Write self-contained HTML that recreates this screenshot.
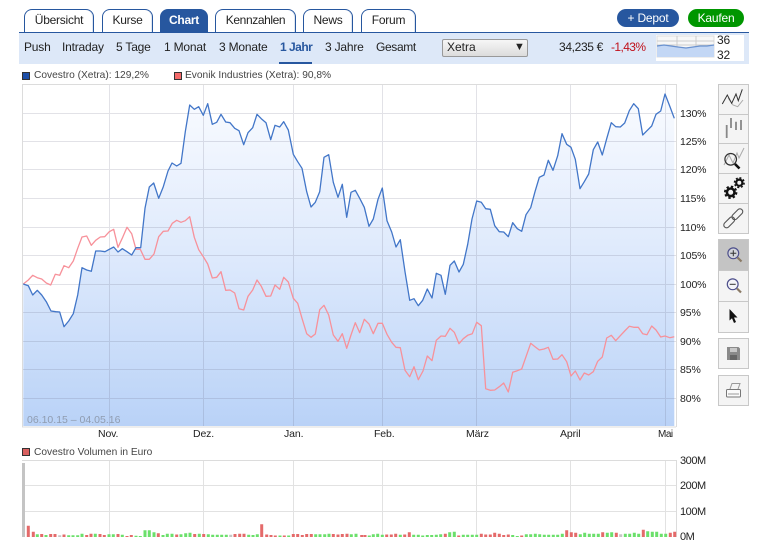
<!DOCTYPE html>
<html><head><meta charset="utf-8"><style>
html,body{margin:0;padding:0;background:#fff}
body{width:768px;height:546px;position:relative;overflow:hidden;font-family:"Liberation Sans",sans-serif;color:#222}
.a{position:absolute;white-space:nowrap}
.tab{position:absolute;top:9px;height:22px;line-height:21px;border:1px solid #27579f;border-bottom:0;border-radius:8px 8px 0 0;background:#fff;font-size:12px;letter-spacing:-.25px;text-align:center;box-sizing:content-box;color:#222;box-shadow:inset -1px 0 0 #dfe6f0}
.n{position:absolute;top:40px;font-size:12px;letter-spacing:-.2px;line-height:14px;white-space:nowrap;color:#222}
.l{position:absolute;font-size:10.5px;letter-spacing:-.12px;line-height:13px;white-space:nowrap;color:#222}
.v{font-size:11px;letter-spacing:-.45px}
.lg{font-size:10.2px;letter-spacing:0;color:#444}
.btn{position:absolute;top:9px;height:18px;line-height:18px;border-radius:9px;color:#fff;font-size:12px;letter-spacing:-.2px;text-align:center}
</style></head><body>
<div class="tab" style="left:24px;width:68px">Übersicht</div>
<div class="tab" style="left:102px;width:49px">Kurse</div>
<div class="tab" style="left:160px;width:46px;background:#27579f;color:#fff;font-weight:bold;box-shadow:none">Chart</div>
<div class="tab" style="left:215px;width:79px;letter-spacing:-.4px">Kennzahlen</div>
<div class="tab" style="left:303px;width:48px">News</div>
<div class="tab" style="left:361px;width:53px">Forum</div>
<div class="btn" style="left:617px;width:62px;background:#27579f">+ Depot</div>
<div class="btn" style="left:688px;width:56px;background:#009600">Kaufen</div>

<div class="a" style="left:19px;top:32px;width:730px;height:32px;background:#dde8f8;border-top:1px solid #27579f;box-sizing:border-box"></div>
<div class="n" style="left:24px">Push</div>
<div class="n" style="left:62px">Intraday</div>
<div class="n" style="left:116px">5 Tage</div>
<div class="n" style="left:164px">1 Monat</div>
<div class="n" style="left:219px">3 Monate</div>
<div class="n" style="left:280px;font-weight:bold;color:#27579f;letter-spacing:-.5px">1 Jahr</div>
<div class="a" style="left:279px;top:62px;width:33px;height:2px;background:#27579f"></div>
<div class="n" style="left:325px">3 Jahre</div>
<div class="n" style="left:376px;letter-spacing:-.35px">Gesamt</div>
<div class="a" style="left:442px;top:39px;width:86px;height:18px;box-sizing:border-box;border:1px solid #999;border-radius:2px;background:linear-gradient(#f6f6f6,#dcdcdc);font-size:12px;line-height:15px;padding-left:4px">Xetra<span style="position:absolute;left:71px;top:0;font-size:11px">▼</span></div>
<div class="n" style="left:559px;letter-spacing:-.35px">34,235 €</div>
<div class="n" style="left:611px;color:#c0101a;letter-spacing:-.6px">-1,43%</div>
<div class="a" style="left:656px;top:35px;width:88px;height:26px;background:#fff"></div>
<svg class="a" style="left:656px;top:35px" width="60" height="26" viewBox="0 0 60 26">
<rect x="1" y="1" width="57" height="21" fill="#f7f7f7" stroke="#ddd"/>
<path d="M1 6H58M1 10H58M21 1V22M40 1V22" stroke="#ccc" fill="none"/>
<path d="M1 11L8 10L15 11L22 12L30 13L37 12L44 11L51 11L58 10V22H1Z" fill="#c3d7f5"/>
<path d="M1 11L8 10L15 11L22 12L30 13L37 12L44 11L51 11L58 10" fill="none" stroke="#6a92cf" stroke-width="1.2"/>
</svg>
<div class="n" style="left:717px;top:33px">36</div>
<div class="n" style="left:717px;top:48px">32</div>

<svg class="a" style="left:22px;top:72px" width="9" height="8"><rect x=".5" y=".5" width="7" height="7" fill="#1d4fa8" stroke="#333"/></svg>
<div class="l lg" style="left:34px;top:69px">Covestro (Xetra): 129,2%</div>
<svg class="a" style="left:174px;top:72px" width="9" height="8"><rect x=".5" y=".5" width="7" height="7" fill="#f46a6a" stroke="#333"/></svg>
<div class="l lg" style="left:185px;top:69px">Evonik Industries (Xetra): 90,8%</div>

<svg class="a" style="left:0;top:0" width="768" height="546" viewBox="0 0 768 546">
<defs><linearGradient id="g" gradientUnits="userSpaceOnUse" x1="0" y1="95" x2="0" y2="426"><stop offset="0" stop-color="#f9fbff"/><stop offset=".5" stop-color="#dde9fc"/><stop offset="1" stop-color="#b9d2f7"/></linearGradient></defs>
<path fill="url(#g)" d="M23.3 284L28.3 285.7 32.7 295 37.3 290.3 41.7 295 46.3 301.7 51 311 55.7 311.7 59.7 312 64 326.7 68.7 321 73.3 313.7 77.7 295 82 267.7 86.7 270 91.3 271.3 95.7 251 100.3 251 105 251.7 109.3 249.3 113.7 247 118 252 122.3 248.7 127 251.7 131.7 255 136 247.7 140.7 247.7 145 208.3 149.3 187 153.7 183 158.7 198.3 163.3 186.7 168 171 172 163 176.7 166 181 163.3 185.3 131.7 189.7 105 194.3 109.3 198.7 106.7 203.3 115.3 207.7 103.7 212.3 124.3 216.7 122.3 221 114.3 225.7 122 230 122.7 234.7 128.3 239 130.7 243.7 144.7 248 132.7 252.7 127.7 257 114.3 261.3 118.7 266 122.7 270.7 139.7 275 125.3 279.7 127 283.7 121.7 288.3 130 293.3 154.3 297.7 161.7 302 168.3 306.7 191.7 311 207 315.3 202.3 319.7 191.7 324 157.3 328.7 154.7 333.3 182.3 338 197.3 342.3 184.3 346.7 217.3 351 192.3 355.3 190.3 359.7 198.3 364.3 207.3 369 226.3 373.3 219 378 199.3 382.3 188 387 220.7 391.7 232 396 247 400.3 239.7 405 271.7 409.7 300.3 414 298.7 418.3 305.7 422.7 300.3 427.3 289 432 298 436.3 273.3 441 275.3 445.3 294.3 450 265.3 454.3 261 459 272 463.3 264.3 467.7 244.3 472 219 476.7 201 481.3 202.3 485.7 208.7 490.3 209.3 494.7 225.7 499.3 231.7 503.7 232 508.3 236.7 512.7 222.7 517.3 228.7 521.7 231.3 526 214.7 530.7 207.7 535 191.7 539.3 177.3 544 175 548.3 160.3 553 170.3 557.7 155.7 562 133.7 566.7 144.3 571 147.3 575.3 159.3 580 188.7 584.3 181.7 588.7 174 593.3 149.7 597.7 142 602.3 155 606.7 138.7 611.3 122.7 615.7 126.7 620.3 127 624.7 123 629.3 110.7 633.7 103.7 638.3 108.7 642.7 135 647 130.7 651.7 126 656 114.3 660.7 111 665 94 669.7 106 674.3 118.3V426H23.3Z"/>
<path fill="none" stroke="rgb(100,100,125)" stroke-opacity=".19" stroke-width="1" d="M23 113.5H676M23 141.5H676M23 169.5H676M23 198.5H676M23 227.5H676M23 255.5H676M23 284.5H676M23 312.5H676M23 341.5H676M23 369.5H676M23 398.5H676M109.5 85V426M203.5 85V426M293.5 85V426M382.5 85V426M476.5 85V426M570.5 85V426M665.5 85V426"/>
<path fill="none" stroke="#dcdcdc" d="M22.5 84V427H676M22.5 84.5H676.5V427"/>
<path fill="none" stroke="#f7919a" stroke-width="1.3" stroke-linejoin="round" d="M23.3 284L28.3 280 32.7 275.3 37.3 277.7 41.7 279 46.3 283 50.7 285 55.3 274.3 59.7 275.3 64 265.7 68.7 267.7 73.3 261 77.7 248.3 82 237 86.7 236 91.3 245.3 95.7 240.3 100.3 237 104.7 236.7 109.3 231.7 113.7 229.3 118 247.3 122.7 237.3 127 227.3 131.7 233.7 136 249.3 140.3 249.3 145 259.3 149.3 259.3 154 254 158.7 236.7 163.3 231.3 168 231 172.3 223.3 176.7 220.3 181 222.3 185.3 220.7 189.7 216.7 194.3 237.3 198.7 249.7 203.3 256.7 207.7 264 212.3 278 216.7 277.3 221 271.7 225.7 290.3 230 290 234.7 293 239 308.7 243.7 310 248 296.3 252.7 290 257 280 261.3 286.3 266 296.3 270.7 296 275 285 279.7 289.3 283.7 277.3 288.3 282 293.3 298.3 297.7 303.3 302 318.3 306.7 333.7 311 337.3 315.3 334 319.7 309.7 324 305.3 328.7 315 333.3 335 338 341.3 342.3 333.7 346.7 348.3 351 335 355.3 322.7 359.7 332.7 364.3 319.3 369 324 373.3 333.7 378 323.3 382.3 323.3 387 334.3 391.7 342.3 396 347.3 400.3 347.7 405 370.3 409.7 376.7 414 366.7 418.3 379.7 423 371 427.3 356 432 360.7 436.3 340.3 441 336 445.3 336.3 450 328.3 454.3 332.3 459 343.7 463.3 338.7 467.7 335.3 472.3 333.7 476.7 322.3 481.3 325.7 485.7 388.7 490.3 390.3 494.7 390 499.3 386.7 503.7 383 508.3 392 512.7 372.3 517.3 370.7 521.7 369 526 356.7 530.7 343.3 535 346.7 539.3 350 544 349 548.3 347.3 553 359.3 557.7 359 562 354.7 566.7 361.7 571 376 575.3 371 580 380 584.3 373 588.7 375 593.3 371.7 597.7 361.3 602.3 357 606.7 338 611.3 335.3 615.7 340.7 620.3 335.7 624.7 331 629.3 326.3 633.7 327.3 638.3 327.3 642.7 333.7 647 334.7 651.7 326 656 330 660.7 337 665 336 669.7 337.7 674.3 336.7"/>
<path fill="none" stroke="#4276c8" stroke-width="1.3" stroke-linejoin="round" d="M23.3 284L28.3 285.7 32.7 295 37.3 290.3 41.7 295 46.3 301.7 51 311 55.7 311.7 59.7 312 64 326.7 68.7 321 73.3 313.7 77.7 295 82 267.7 86.7 270 91.3 271.3 95.7 251 100.3 251 105 251.7 109.3 249.3 113.7 247 118 252 122.3 248.7 127 251.7 131.7 255 136 247.7 140.7 247.7 145 208.3 149.3 187 153.7 183 158.7 198.3 163.3 186.7 168 171 172 163 176.7 166 181 163.3 185.3 131.7 189.7 105 194.3 109.3 198.7 106.7 203.3 115.3 207.7 103.7 212.3 124.3 216.7 122.3 221 114.3 225.7 122 230 122.7 234.7 128.3 239 130.7 243.7 144.7 248 132.7 252.7 127.7 257 114.3 261.3 118.7 266 122.7 270.7 139.7 275 125.3 279.7 127 283.7 121.7 288.3 130 293.3 154.3 297.7 161.7 302 168.3 306.7 191.7 311 207 315.3 202.3 319.7 191.7 324 157.3 328.7 154.7 333.3 182.3 338 197.3 342.3 184.3 346.7 217.3 351 192.3 355.3 190.3 359.7 198.3 364.3 207.3 369 226.3 373.3 219 378 199.3 382.3 188 387 220.7 391.7 232 396 247 400.3 239.7 405 271.7 409.7 300.3 414 298.7 418.3 305.7 422.7 300.3 427.3 289 432 298 436.3 273.3 441 275.3 445.3 294.3 450 265.3 454.3 261 459 272 463.3 264.3 467.7 244.3 472 219 476.7 201 481.3 202.3 485.7 208.7 490.3 209.3 494.7 225.7 499.3 231.7 503.7 232 508.3 236.7 512.7 222.7 517.3 228.7 521.7 231.3 526 214.7 530.7 207.7 535 191.7 539.3 177.3 544 175 548.3 160.3 553 170.3 557.7 155.7 562 133.7 566.7 144.3 571 147.3 575.3 159.3 580 188.7 584.3 181.7 588.7 174 593.3 149.7 597.7 142 602.3 155 606.7 138.7 611.3 122.7 615.7 126.7 620.3 127 624.7 123 629.3 110.7 633.7 103.7 638.3 108.7 642.7 135 647 130.7 651.7 126 656 114.3 660.7 111 665 94 669.7 106 674.3 118.3"/>

<path fill="none" stroke="#e2e2e2" d="M23 485.5H676M23 511.5H676M109.5 461V537M203.5 461V537M293.5 461V537M382.5 461V537M476.5 461V537M570.5 461V537M665.5 461V537"/>
<path fill="none" stroke="#dcdcdc" d="M22 460.5H676.5V537"/>
<rect x="22" y="463" width="3" height="74" fill="#c4c4c4"/>
<path fill="none" stroke="#e46a6a" stroke-width="3" d="M28.3 537v-11.3M33.3 537v-5.3M41.7 537v-3M50.7 537v-3M55 537v-3M64 537v-2.5M86.7 537v-2M91 537v-3.3M100 537v-3M104.3 537v-2M118 537v-3M127 537v-1M131.3 537v-2M158.3 537v-3.7M176.7 537v-2.5M194.7 537v-3M203.7 537v-3M235 537v-3M239.7 537v-3.3M244 537v-3.3M261.7 537v-12.7M266.7 537v-2.5M271 537v-2M275.3 537v-1.5M284.3 537v-1.5M293.3 537v-3M297.7 537v-3M302.3 537v-2M306.7 537v-3M311.3 537v-3M333.3 537v-3M338 537v-2.5M342.3 537v-3M347 537v-3.3M361.7 537v-2M365 537v-2M386.7 537v-2.5M391.3 537v-2.5M395.7 537v-3.3M404.7 537v-2.5M409.3 537v-4.7M445.3 537v-3.3M458.7 537v-1.5M481.3 537v-3.3M485.7 537v-2.5M490.3 537v-2.5M494.7 537v-4.3M499.3 537v-3.3M503.7 537v-2M508.3 537v-2.5M521.7 537v-1.5M566.7 537v-6.7M571.3 537v-4.7M575.7 537v-4.3M602.7 537v-4.7M616.3 537v-4.3M643.3 537v-7.3M670.3 537v-4.3M674.7 537v-5.3"/>
<path fill="none" stroke="#6be06b" stroke-width="3" d="M37.3 537v-2.7M46 537v-2M68.7 537v-1.7M73 537v-1.7M77.7 537v-1.7M82 537v-3.3M95.3 537v-3.3M109 537v-2.7M113.3 537v-2.7M122.3 537v-2.3M136 537v-1.3M140.3 537v-1M145 537v-6.7M149.3 537v-6.7M154 537v-4.7M163 537v-2M167.3 537v-3.3M172 537v-3.3M181 537v-2.7M185.7 537v-3.7M190 537v-4.3M199.3 537v-3.3M208.3 537v-2.7M212.7 537v-2.3M217.3 537v-2.3M221.7 537v-2.3M226.3 537v-2.3M248.7 537v-2.3M253 537v-2M257.3 537v-2.7M280 537v-1.5M288.7 537v-1.5M315.7 537v-2.7M320 537v-2.7M324.7 537v-2.7M329 537v-3.3M351.3 537v-2.7M356 537v-3.3M369.3 537v-1.5M373.3 537v-2.7M377.7 537v-3.3M382.3 537v-2.3M400.3 537v-2.3M413.7 537v-2.3M418.3 537v-2.3M422.7 537v-1.5M427.3 537v-2M431.7 537v-2M436.3 537v-2.3M440.7 537v-2.7M449.7 537v-4.7M454.3 537v-5.3M463.3 537v-2.3M467.7 537v-2.3M472.3 537v-2.3M476.7 537v-2.3M512.7 537v-2M517.3 537v-1M526.3 537v-2.7M530.7 537v-2.7M535.3 537v-3.3M539.7 537v-2.7M544.3 537v-2.3M548.7 537v-2.3M553.3 537v-2.3M557.7 537v-2.3M562.3 537v-3.3M580.3 537v-2.7M584.7 537v-4.3M589.3 537v-3.3M593.7 537v-3.3M598.3 537v-3.3M607.3 537v-4.3M611.7 537v-4.7M625.3 537v-3.3M629.7 537v-3.3M634.3 537v-4.3M638.7 537v-3.3M647.7 537v-5.7M652.3 537v-5.3M656.7 537v-5.3M661.3 537v-3.3M665.7 537v-3.3"/>
<path fill="none" stroke="#c6c6c6" stroke-width="3" d="M59.7 537v-1.7M230.7 537v-2.3M620.7 537v-2.7"/>

<g fill="#f4f4f4" stroke="#c8c8c8">
<rect x="718.5" y="84.5" width="30" height="30"/><rect x="718.5" y="114.5" width="30" height="29"/><rect x="718.5" y="143.5" width="30" height="30"/><rect x="718.5" y="173.5" width="30" height="30"/><rect x="718.5" y="203.5" width="30" height="30"/>
<rect x="718.5" y="239.5" width="30" height="31" fill="#c4c4c4"/><rect x="718.5" y="270.5" width="30" height="31"/><rect x="718.5" y="301.5" width="30" height="31"/>
<rect x="718.5" y="338.5" width="30" height="30"/><rect x="718.5" y="375.5" width="30" height="30"/>
</g>
<path d="M728 98L733 105 737.7 106.7 743 100" fill="none" stroke="#aaa"/>
<path d="M722.3 104L727.3 95 731.7 103.3 736 94 738.3 100.7 742.3 89.3" fill="none" stroke="#333"/>
<path d="M726.7 125V138M731 118V128M736 121.7V130M741 120V130" stroke="#888" stroke-width="1.8"/>
<path d="M724 165L729 155 733 163 737 153 739 158 744 148" fill="none" stroke="#aaa"/>
<circle cx="730.7" cy="159.3" r="5.8" fill="none" stroke="#333" stroke-width="1.2"/>
<path d="M735 164L739.5 168.5" stroke="#111" stroke-width="2.6"/>
<circle cx="730.7" cy="192.3" r="3.8" fill="none" stroke="#111" stroke-width="2.6"/>
<circle cx="730.7" cy="192.3" r="5.8" fill="none" stroke="#111" stroke-width="1.8" stroke-dasharray="2.4 2.15"/>
<circle cx="739.3" cy="182.7" r="3.1" fill="none" stroke="#111" stroke-width="2.2"/>
<circle cx="739.3" cy="182.7" r="4.8" fill="none" stroke="#111" stroke-width="1.5" stroke-dasharray="2 1.77"/>
<g fill="none" stroke="#555" stroke-width="1.1" transform="rotate(-45 733.3 218.3)"><rect x="721" y="215.5" width="13" height="5.6" rx="2.8"/><rect x="732.5" y="215.5" width="13" height="5.6" rx="2.8"/></g>
<circle cx="733.3" cy="253.3" r="5.4" fill="#dfe3ef" fill-opacity=".5" stroke="#4d4f8c" stroke-width="1.2"/>
<path d="M730.3 253.3H736.3M733.3 250.3V256.3" stroke="#333"/>
<path d="M737.5 257.5L741.5 261.5" stroke="#8a7a66" stroke-width="2.2"/>
<circle cx="732.7" cy="284.3" r="5.4" fill="#f4f4f8" stroke="#4d4f8c" stroke-width="1.2"/>
<path d="M729.7 284.3H735.7" stroke="#333"/>
<path d="M737 288.5L741 292.5" stroke="#8a7a66" stroke-width="2.2"/>
<path d="M729.5 309V320.5L732 318.3 734 323 736 322 734 317.5 737.5 317.5Z" fill="#111"/>
<path d="M727 347H738.5L740 348.5V360H727Z" fill="#8a8a8a"/>
<rect x="730" y="348" width="7" height="4" fill="#c8c8c8"/><rect x="730" y="355" width="7" height="5" fill="#666"/>
<path d="M730 389L732 383.5H740L738 389" fill="#f4f4f4" stroke="#999"/>
<rect x="726.5" y="389.5" width="14" height="7.5" fill="#fafafa" stroke="#777" rx="1"/>
<path d="M728 394H739" stroke="#999"/>
</svg>

<div class="l" style="left:27px;top:414px;color:#8f9cb0;letter-spacing:0">06.10.15 – 04.05.16</div>
<div class="l" style="left:98px;top:428px">Nov.</div>
<div class="l" style="left:193px;top:428px">Dez.</div>
<div class="l" style="left:284px;top:428px">Jan.</div>
<div class="l" style="left:374px;top:428px">Feb.</div>
<div class="l" style="left:466px;top:428px">März</div>
<div class="l" style="left:560px;top:428px">April</div>
<div class="l" style="left:658px;top:428px;font-size:10px;letter-spacing:-.5px">Mai</div>

<div class="l" style="left:680px;top:108px">130%</div>
<div class="l" style="left:680px;top:136px">125%</div>
<div class="l" style="left:680px;top:164px">120%</div>
<div class="l" style="left:680px;top:193px">115%</div>
<div class="l" style="left:680px;top:222px">110%</div>
<div class="l" style="left:680px;top:250px">105%</div>
<div class="l" style="left:680px;top:279px">100%</div>
<div class="l" style="left:680px;top:307px">95%</div>
<div class="l" style="left:680px;top:336px">90%</div>
<div class="l" style="left:680px;top:364px">85%</div>
<div class="l" style="left:680px;top:393px">80%</div>

<svg class="a" style="left:22px;top:448px" width="9" height="8"><rect x=".5" y=".5" width="7" height="7" fill="#d9605f" stroke="#333"/></svg>
<div class="l lg" style="left:34px;top:446px">Covestro Volumen in Euro</div>
<div class="l v" style="left:680px;top:455px">300M</div>
<div class="l v" style="left:680px;top:480px">200M</div>
<div class="l v" style="left:680px;top:506px">100M</div>
<div class="l v" style="left:680px;top:531px">0M</div>
</body></html>
